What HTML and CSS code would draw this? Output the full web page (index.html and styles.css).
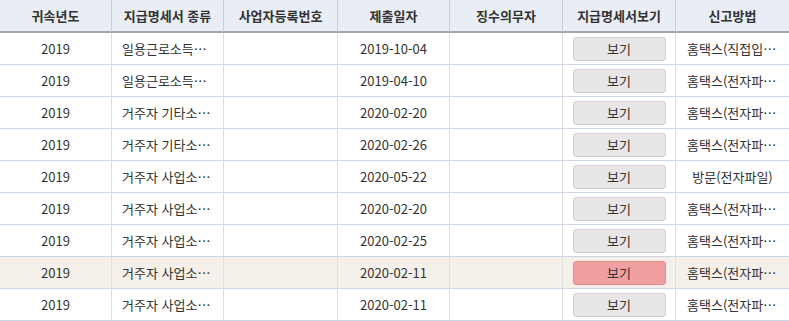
FILE: index.html
```html
<!DOCTYPE html>
<html lang="ko">
<head>
<meta charset="utf-8">
<link rel="stylesheet" href="styles.css">
</head>
<body>
<table class="grid">
  <colgroup>
    <col class="c1"><col class="c2"><col class="c3"><col class="c4"><col class="c5"><col class="c6"><col class="c7">
  </colgroup>
  <thead>
    <tr>
      <th>귀속년도</th><th>지급명세서 종류</th><th>사업자등록번호</th><th>제출일자</th><th>징수의무자</th><th>지급명세서보기</th><th>신고방법</th>
    </tr>
  </thead>
  <tbody>
    <tr><td>2019</td><td>일용근로소득지급명세서</td><td></td><td>2019-10-04</td><td></td><td><button class="view">보기</button></td><td class="method">홈택스(직접입력)</td></tr>
    <tr><td>2019</td><td>일용근로소득지급명세서</td><td></td><td>2019-04-10</td><td></td><td><button class="view">보기</button></td><td class="method">홈택스(전자파일)</td></tr>
    <tr><td>2019</td><td>거주자 기타소득지급명세서</td><td></td><td>2020-02-20</td><td></td><td><button class="view">보기</button></td><td class="method">홈택스(전자파일)</td></tr>
    <tr><td>2019</td><td>거주자 기타소득지급명세서</td><td></td><td>2020-02-26</td><td></td><td><button class="view">보기</button></td><td class="method">홈택스(전자파일)</td></tr>
    <tr><td>2019</td><td>거주자 사업소득지급명세서</td><td></td><td>2020-05-22</td><td></td><td><button class="view">보기</button></td><td class="method">방문(전자파일)</td></tr>
    <tr><td>2019</td><td>거주자 사업소득지급명세서</td><td></td><td>2020-02-20</td><td></td><td><button class="view">보기</button></td><td class="method">홈택스(전자파일)</td></tr>
    <tr><td>2019</td><td>거주자 사업소득지급명세서</td><td></td><td>2020-02-25</td><td></td><td><button class="view">보기</button></td><td class="method">홈택스(전자파일)</td></tr>
    <tr class="active"><td>2019</td><td>거주자 사업소득지급명세서</td><td></td><td>2020-02-11</td><td></td><td><button class="view">보기</button></td><td class="method">홈택스(전자파일)</td></tr>
    <tr><td>2019</td><td>거주자 사업소득지급명세서</td><td></td><td>2020-02-11</td><td></td><td><button class="view">보기</button></td><td class="method">홈택스(전자파일)</td></tr>
  </tbody>
</table>
</body>
</html>
```
FILE: styles.css
```css
html, body {
  margin: 0;
  padding: 0;
  background: #ffffff;
}
body {
  font-family: "Noto Sans CJK KR", "Noto Sans", sans-serif;
  font-size: 13px;
  color: #333333;
  overflow: hidden;
}
.grid {
  width: 789px;
  table-layout: fixed;
  border-collapse: separate;
  border-spacing: 0;
}
.c1 { width: 112px; }
.c2 { width: 112px; }
.c3 { width: 114px; }
.c4 { width: 112px; }
.c5 { width: 113px; }
.c6 { width: 113px; }
.c7 { width: 113px; }
.grid th,
.grid td {
  box-sizing: border-box;
  padding: 0 10px;
  text-align: center;
  white-space: nowrap;
  overflow: hidden;
  text-overflow: ellipsis;
  line-height: 16px;
}
.grid th {
  height: 33px;
  background: #e9eef6;
  border-bottom: 2px solid #a4a6a9;
  border-right: 1px solid #c9ced6;
  font-weight: bold;
  color: #333333;
}
.grid td {
  height: 32px;
  border-bottom: 1px solid #cad6e3;
  border-right: 1px solid #dedede;
}
.grid th:last-child,
.grid td:last-child {
  border-right: none;
}
.grid td.method {
  padding: 0 11px;
}
.grid tr.active td {
  background: #f5f0ea;
}
.view {
  display: block;
  box-sizing: border-box;
  width: 93px;
  height: 24px;
  margin: 0 auto;
  padding: 0;
  border: 1px solid #cfcfcf;
  border-radius: 3px;
  background: #e8e6e6;
  font-family: inherit;
  font-size: 13px;
  color: #333333;
  line-height: 20px;
  cursor: pointer;
}
.active .view {
  background: #f0a0a0;
  border-color: #e28c8c;
}
.grid td:nth-child(6) {
  padding: 0;
}
```
